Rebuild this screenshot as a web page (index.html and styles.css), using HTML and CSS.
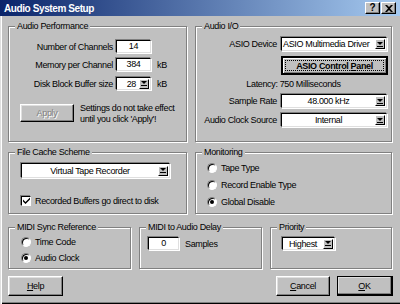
FILE: index.html
```html
<!DOCTYPE html>
<html lang="en">
<head>
    <meta charset="UTF-8">
    <meta name="viewport" content="width=device-width, initial-scale=1.0">
    <title>Audio System Setup</title>
    <link rel="stylesheet" href="styles.css">
</head>
<body>
    <div class="window">
        <div class="titlebar">
            <span class="title">Audio System Setup</span>
            <div class="caption-buttons">
                <span class="cap-btn">?</span>
                <span class="cap-btn">
                    <svg width="8" height="7" viewBox="0 0 8 7"><path d="M0 0h2l2 2 2-2h2L5 3.5 8 7H6L4 5 2 7H0l3-3.5z" fill="#000"/></svg>
                </span>
            </div>
        </div>

        <div class="dialog">
            <div class="row row-top">
                <fieldset class="group perf">
                    <legend>Audio Performance</legend>
                    <div class="field first">
                        <label>Number of Channels</label>
                        <span class="edit">14</span>
                    </div>
                    <div class="field">
                        <label>Memory per Channel</label>
                        <span class="edit">384</span>
                        <span class="unit">kB</span>
                    </div>
                    <div class="field third">
                        <label>Disk Block Buffer size</label>
                        <span class="combo">
                            <span class="value right">28</span>
                            <span class="arrow"></span>
                        </span>
                        <span class="unit">kB</span>
                    </div>
                    <div class="apply-row">
                        <button class="btn disabled">Apply</button>
                        <p class="note">Settings do not take effect<br>until you click 'Apply'!</p>
                    </div>
                </fieldset>

                <fieldset class="group io">
                    <legend>Audio I/O</legend>
                    <div class="io-field first">
                        <label>ASIO Device</label>
                        <span class="combo">
                            <span class="value left">ASIO Multimedia Driver</span>
                            <span class="arrow"></span>
                        </span>
                    </div>
                    <div class="io-field panel-row">
                        <span></span>
                        <button class="btn focus"><span class="focus-rect">ASIO Control <u>P</u>anel</span></button>
                    </div>
                    <div class="latency">Latency: 750 Milliseconds</div>
                    <div class="io-field rate">
                        <label>Sample Rate</label>
                        <span class="combo">
                            <span class="value">48.000 kHz</span>
                            <span class="arrow"></span>
                        </span>
                    </div>
                    <div class="io-field clock">
                        <label>Audio Clock Source</label>
                        <span class="combo">
                            <span class="value">Internal</span>
                            <span class="arrow"></span>
                        </span>
                    </div>
                </fieldset>
            </div>

            <div class="row row-mid">
                <fieldset class="group cache">
                    <legend>File Cache Scheme</legend>
                    <span class="combo wide">
                        <span class="value">Virtual Tape Recorder</span>
                        <span class="arrow"></span>
                    </span>
                    <div class="check-row">
                        <span class="checkbox">
                            <svg width="7" height="7" viewBox="0 0 7 7"><path d="M0 2.5l2.5 2.5L7 0.5V2.5L2.5 7 0 4.5z" fill="#000"/></svg>
                        </span>
                        <span>Recorded Buffers go direct to disk</span>
                    </div>
                </fieldset>

                <fieldset class="group monitoring">
                    <legend>Monitoring</legend>
                    <div class="option"><span class="radio"></span>Tape Type</div>
                    <div class="option"><span class="radio"></span>Record Enable Type</div>
                    <div class="option"><span class="radio on"></span>Global Disable</div>
                </fieldset>
            </div>

            <div class="row row-low">
                <fieldset class="group sync">
                    <legend>MIDI Sync Reference</legend>
                    <div class="option"><span class="radio"></span>Time Code</div>
                    <div class="option"><span class="radio on"></span>Audio Clock</div>
                </fieldset>

                <fieldset class="group delay">
                    <legend>MIDI to Audio Delay</legend>
                    <div class="delay-row">
                        <span class="edit">0</span>
                        <span>Samples</span>
                    </div>
                </fieldset>

                <fieldset class="group priority">
                    <legend>Priority</legend>
                    <span class="combo">
                        <span class="value">Highest</span>
                        <span class="arrow"></span>
                    </span>
                </fieldset>
            </div>

            <div class="row buttons">
                <button class="btn"><u>H</u>elp</button>
                <div class="spacer"></div>
                <button class="btn cancel"><u>C</u>ancel</button>
                <button class="btn ok"><u>O</u>K</button>
            </div>
        </div>
    </div>
</body>
</html>
```

FILE: styles.css
```css
body {
    margin: 0;
    font-family: "Liberation Sans", Arial, sans-serif;
    font-size: 9px;
    letter-spacing: -0.35px;
    color: #000;
    background-color: #c0c0c0;
}
.window {
    width: 400px;
    height: 304px;
    box-sizing: border-box;
    background-color: #c0c0c0;
    box-shadow: inset 1px 0 0 #dfdfdf, inset 2px 0 0 #fff, inset 0 -1px 0 #000, inset 0 -2px 0 #808080;
    overflow: hidden;
}
.titlebar {
    height: 16px;
    display: flex;
    align-items: center;
    background: linear-gradient(to right, #0a246a, #a6caf0);
}
.title {
    padding-left: 4px;
    color: #fff;
    font-weight: bold;
    font-size: 10px;
    letter-spacing: -0.4px;
    flex: 1;
}
.caption-buttons {
    display: flex;
    gap: 1px;
    margin-right: 4px;
}
.cap-btn {
    width: 15px;
    height: 12px;
    box-sizing: border-box;
    display: flex;
    align-items: center;
    justify-content: center;
    background-color: #c0c0c0;
    border: 1px solid;
    border-color: #fff #000 #000 #fff;
    box-shadow: inset -1px -1px 0 #808080;
    font-weight: bold;
    font-size: 10px;
    letter-spacing: 0;
    line-height: 1;
}
.dialog {
    padding: 5px 0 0 8px;
}
.row {
    display: flex;
    gap: 8px;
}
.row-mid {
    margin-top: 5px;
}
.row-low {
    margin-top: 8px;
}
.buttons {
    margin-top: 7px;
    gap: 0;
    width: 385px;
}
.spacer {
    flex: 1;
}

/* group boxes */
.group {
    margin: 0;
    padding: 0 6px 0 0;
    min-width: 0;
    box-sizing: border-box;
    border: 1px solid #808080;
    box-shadow: inset 1px 1px 0 #fff, 1px 1px 0 #fff;
}
.group legend {
    padding: 0 2px;
    margin-left: 6px;
    height: 10px;
    line-height: 10px;
    background-color: #c0c0c0;
}
.row-top .group { height: 121px; }
.row-mid .group { height: 67px; }
.row-low .group { height: 47px; }
.perf { width: 179px; }
.io { width: 197px; }
.cache { width: 179px; }
.monitoring { width: 197px; }
.sync { width: 123px; }
.delay { width: 123px; }
.priority { width: 122px; }

/* edit boxes and combos */
.edit {
    box-sizing: border-box;
    height: 13px;
    width: 35px;
    background-color: #fff;
    border: 1px solid;
    border-color: #000 #dfdfdf #dfdfdf #000;
    box-shadow: -1px -1px 0 #808080, 1px 1px 0 #fff;
    text-align: center;
    line-height: 11px;
}
.combo {
    box-sizing: border-box;
    height: 14px;
    display: flex;
    align-items: center;
    background-color: #fff;
    border: 1px solid;
    border-color: #000 #dfdfdf #dfdfdf #000;
    box-shadow: -1px -1px 0 #808080, 1px 1px 0 #fff;
}
.combo .value {
    flex: 1;
    text-align: center;
    line-height: 12px;
    white-space: nowrap;
    overflow: hidden;
}
.combo .value.left {
    text-align: left;
    padding-left: 1px;
}
.combo .value.right {
    text-align: right;
    padding-right: 3px;
}
.arrow {
    width: 10px;
    height: 10px;
    margin-right: 1px;
    box-sizing: border-box;
    display: flex;
    flex-direction: column;
    align-items: center;
    justify-content: center;
    gap: 1px;
    background-color: #c0c0c0;
    border: 1px solid;
    border-color: #fff #000 #000 #fff;
}
.arrow::before {
    content: "";
    border-left: 3px solid transparent;
    border-right: 3px solid transparent;
    border-top: 3px solid #000;
}
.arrow::after {
    content: "";
    width: 6px;
    height: 1px;
    background-color: #000;
}

/* audio performance */
.field {
    display: flex;
    align-items: center;
    height: 13px;
    margin-top: 5px;
}
.field.first { margin-top: 9px; }
.field.third { margin-top: 6px; }
.field label {
    width: 104px;
    margin-right: 3px;
    text-align: right;
    white-space: nowrap;
}
.field .combo {
    width: 35px;
    height: 13px;
}
.unit {
    margin-left: 6px;
}
.apply-row {
    display: flex;
    align-items: flex-start;
    margin-top: 14px;
    padding-left: 11px;
}
.note {
    margin: -1px 0 0 6px;
    line-height: 11px;
    white-space: nowrap;
}

/* buttons */
.btn {
    box-sizing: border-box;
    height: 20px;
    width: 55px;
    padding: 0;
    font: inherit;
    letter-spacing: inherit;
    color: #000;
    background-color: #c0c0c0;
    border: 1px solid;
    border-color: #fff #000 #000 #fff;
    box-shadow: inset -1px -1px 0 #808080, inset 1px 1px 0 #dfdfdf;
}
.btn.disabled {
    width: 54px;
    height: 18px;
    color: #808080;
    text-shadow: 1px 1px 0 #fff;
}
.btn.focus {
    width: 107px;
    height: 19px;
    padding: 2px;
    font-weight: bold;
    outline: 1px solid #000;
    outline-offset: -1px;
    border-width: 2px;
    border-color: #000;
    box-shadow: inset 1px 1px 0 #fff, inset -1px -1px 0 #808080;
}
.focus-rect {
    display: block;
    height: 100%;
    box-sizing: border-box;
    border: 1px dotted #000;
    line-height: 11px;
}
.btn.cancel {
    width: 54px;
    margin-right: 7px;
}
.btn.ok {
    width: 56px;
    outline: 1px solid #000;
    outline-offset: -1px;
    border-right-width: 2px;
    border-bottom-width: 2px;
}

/* audio i/o */
.io-field {
    display: grid;
    grid-template-columns: 76px 106px;
    column-gap: 4px;
    align-items: center;
    padding-left: 5px;
}
.io-field label {
    text-align: right;
    white-space: nowrap;
}
.io-field.first { margin-top: 6px; }
.panel-row { margin-top: 5px; }
.latency {
    margin-top: 4px;
    height: 10px;
    line-height: 10px;
    text-align: center;
    padding-left: 6px;
}
.rate { margin-top: 5px; }
.clock { margin-top: 5px; }

/* file cache */
.combo.wide {
    width: 149px;
    height: 15px;
    margin: 6px 0 0 12px;
}
.check-row {
    display: flex;
    align-items: center;
    gap: 4px;
    margin: 17px 0 0 12px;
    height: 11px;
    white-space: nowrap;
}
.checkbox {
    box-sizing: border-box;
    width: 10px;
    height: 10px;
    display: flex;
    align-items: center;
    justify-content: center;
    background-color: #fff;
    border: 1px solid;
    border-color: #000 #fff #fff #000;
    box-shadow: -1px -1px 0 #808080;
}

/* radios */
.option {
    display: flex;
    align-items: center;
    gap: 4px;
    height: 12px;
    margin: 5px 0 0 11px;
    white-space: nowrap;
}
.sync .option {
    margin: 4px 0 0 12px;
}
.radio {
    box-sizing: border-box;
    width: 10px;
    height: 10px;
    display: flex;
    align-items: center;
    justify-content: center;
    border-radius: 50%;
    background-color: #fff;
    border: 1px solid;
    border-color: #808080 #fff #fff #808080;
    box-shadow: inset 1px 1px 0 #000;
}
.radio.on::after {
    content: "";
    width: 4px;
    height: 4px;
    border-radius: 50%;
    background-color: #000;
}

/* midi delay and priority */
.delay-row {
    display: flex;
    align-items: center;
    gap: 6px;
    margin: 5px 0 0 8px;
}
.delay-row .edit {
    width: 31px;
}
.priority .combo {
    width: 53px;
    height: 13px;
    margin: 5px 0 0 11px;
}
```
